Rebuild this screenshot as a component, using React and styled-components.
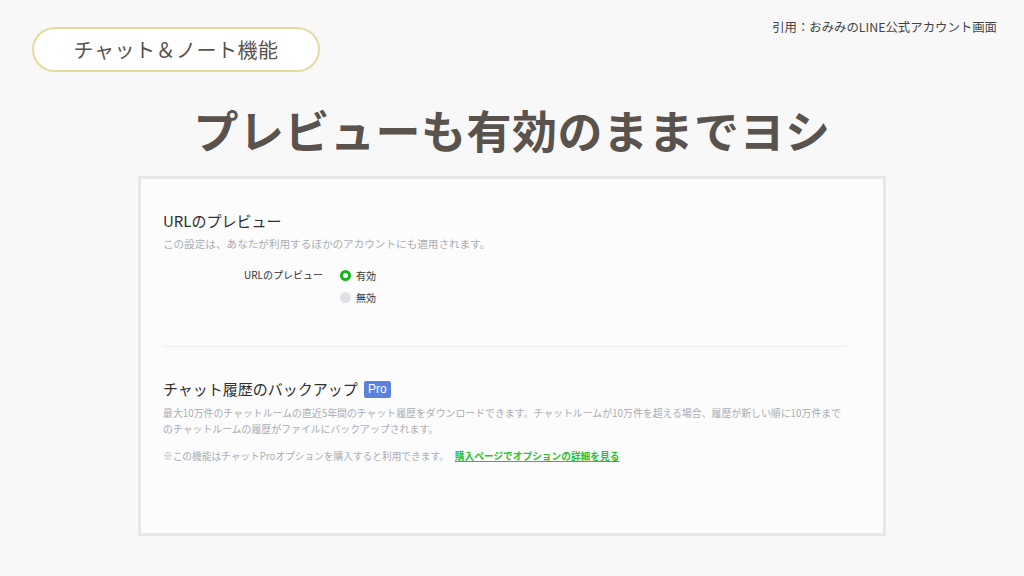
import React from 'react';
import styled, { createGlobalStyle } from 'styled-components';

const GlobalStyle = createGlobalStyle`
  html, body {
    margin: 0;
    padding: 0;
    background: #f8f8f8;
  }
  body {
    font-family: "Noto Sans CJK JP", "Noto Sans", sans-serif;
  }
`;

const Page = styled.div`
  width: 1024px;
  height: 576px;
  overflow: hidden;
  background: #f8f8f8;
`;

const TopBar = styled.header`
  display: flex;
  justify-content: space-between;
  align-items: flex-start;
  padding: 19px 27px 0 32px;
`;

const Pill = styled.div`
  margin-top: 8px;
  width: 288px;
  height: 45px;
  box-sizing: border-box;
  border: 2px solid #e3dc9c;
  border-radius: 23px;
  background: #fff;
  display: flex;
  align-items: center;
  justify-content: center;
  color: #57514b;
  font-size: 20px;
  font-weight: 400;
  letter-spacing: 0.5px;
`;

const Citation = styled.div`
  font-size: 12.4px;
  line-height: 16px;
  font-weight: 400;
  color: #444;
`;

const Title = styled.h1`
  margin: 30px 0 0;
  text-align: center;
  font-size: 45px;
  line-height: 56px;
  font-weight: 700;
  color: #5a524c;
  letter-spacing: 0.5px;
`;

const Card = styled.section`
  box-sizing: border-box;
  width: 748px;
  height: 360px;
  margin: 18px 0 0 138px;
  border: 3px solid #e8e8e8;
  background: #fcfcfc;
  padding: 31px 37px 0 22px;
`;

const Section = styled.div`
  padding-bottom: ${(p) => (p.$divided ? '38px' : '0')};
  border-bottom: ${(p) => (p.$divided ? '1px solid #eeeeee' : 'none')};
  margin-bottom: ${(p) => (p.$divided ? '31px' : '0')};
`;

const Heading = styled.h2`
  margin: 0;
  display: flex;
  align-items: center;
  gap: 6px;
  font-size: 15px;
  line-height: 22px;
  font-weight: 400;
  color: #2f2f2f;
`;

const ProBadge = styled.span`
  display: inline-flex;
  align-items: center;
  justify-content: center;
  width: 27px;
  height: 17px;
  border-radius: 2px;
  background: #5a82db;
  color: #fff;
  font-family: "Liberation Sans", Arial, sans-serif;
  font-size: 12px;
  font-weight: 400;
`;

const Desc = styled.p`
  margin: ${(p) => p.$top || '4px'} 0 0;
  font-size: ${(p) => p.$size || '9.9px'};
  line-height: 16px;
  color: #a9adb3;
`;

const SettingRow = styled.div`
  display: grid;
  grid-template-columns: 160px auto;
  column-gap: 17px;
  margin-top: 12px;
`;

const SettingLabel = styled.div`
  text-align: right;
  font-size: 10px;
  line-height: 22px;
  color: #333;
`;

const RadioList = styled.div`
  display: flex;
  flex-direction: column;
`;

const RadioItem = styled.label`
  display: flex;
  align-items: center;
  gap: 5px;
  height: 22px;
  font-size: 10px;
  color: #333;
`;

const RadioDot = styled.span`
  box-sizing: border-box;
  width: 11px;
  height: 11px;
  border-radius: 50%;
  background: ${(p) => (p.$checked ? '#fff' : '#dfe1e5')};
  border: ${(p) => (p.$checked ? '3px solid #13b51b' : 'none')};
`;

const Note = styled.p`
  margin: 11px 0 0;
  font-size: 9.7px;
  line-height: 16px;
  color: #a9adb3;
`;

const Link = styled.a`
  margin-left: 6px;
  color: #2cc02c;
  font-weight: 700;
  text-decoration: underline;
`;

const options = [
  { label: '有効', checked: true },
  { label: '無効', checked: false },
];

export default function App() {
  return (
    <Page>
      <GlobalStyle />
      <TopBar>
        <Pill>チャット＆ノート機能</Pill>
        <Citation>引用：おみみのLINE公式アカウント画面</Citation>
      </TopBar>
      <Title>プレビューも有効のままでヨシ</Title>
      <Card>
        <Section $divided>
          <Heading>URLのプレビュー</Heading>
          <Desc $size="10.6px">この設定は、あなたが利用するほかのアカウントにも適用されます。</Desc>
          <SettingRow>
            <SettingLabel>URLのプレビュー</SettingLabel>
            <RadioList>
              {options.map((o) => (
                <RadioItem key={o.label}>
                  <RadioDot $checked={o.checked} />
                  {o.label}
                </RadioItem>
              ))}
            </RadioList>
          </SettingRow>
        </Section>
        <Section>
          <Heading>
            チャット履歴のバックアップ<ProBadge>Pro</ProBadge>
          </Heading>
          <Desc $top="5px">
            最大10万件のチャットルームの直近5年間のチャット履歴をダウンロードできます。チャットルームが10万件を超える場合、履歴が新しい順に10万件までのチャットルームの履歴がファイルにバックアップされます。
          </Desc>
          <Note>
            ※この機能はチャットProオプションを購入すると利用できます。
            <Link href="#">購入ページでオプションの詳細を見る</Link>
          </Note>
        </Section>
      </Card>
    </Page>
  );
}
